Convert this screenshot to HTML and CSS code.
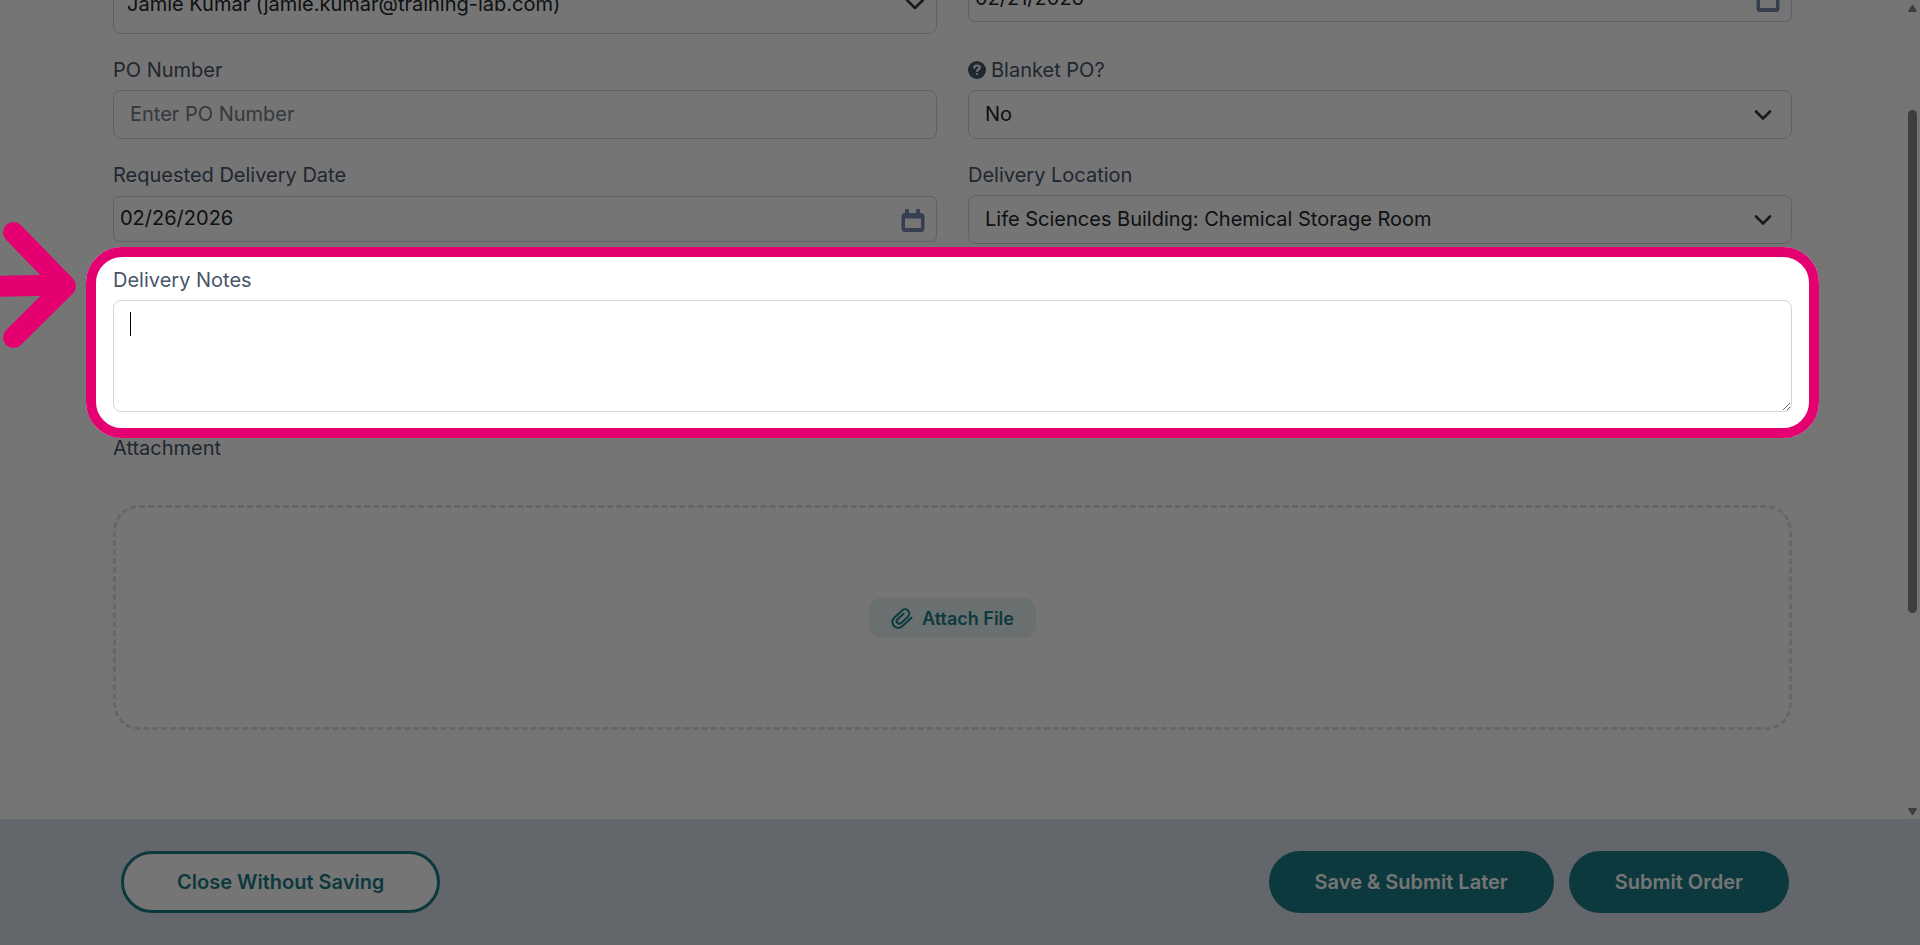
FILE: index.html
```html
<!DOCTYPE html>
<html lang="en">
<head>
<meta charset="utf-8">
<title>Order Details</title>
<link rel="stylesheet" href="styles.css">
</head>
<body>
<div class="page">
  <div class="viewport">
    <main class="content">
      <form class="form" id="order">
        <div class="row row-top">
          <div class="control">
            <select class="input select select-tall" aria-label="Requester">
              <option>Jamie Kumar (jamie.kumar@training-lab.com)</option>
            </select>
            <svg class="chevron chevron-tall" viewBox="0 0 20 20" aria-hidden="true"><path d="M2 6l8 8 8-8"/></svg>
          </div>
          <div class="control control-date">
            <input class="input date" type="text" value="02/21/2026" aria-label="Order date">
            <svg class="calendar" viewBox="0 0 24 24" aria-hidden="true"><path d="M5 0h2a1 1 0 0 1 1 1v3h7V1a1 1 0 0 1 1-1h2a1 1 0 0 1 1 1v3h1a3.500 3.500 0 0 1 3.500 3.500v12A3.500 3.500 0 0 1 20 23H4a3.500 3.500 0 0 1-3.500-3.500v-12A3.500 3.500 0 0 1 4 4V1a1 1 0 0 1 1-1zM4 9.500V19h16V9.500z"/></svg>
          </div>
        </div>

        <div class="row">
          <div class="field">
            <label class="label" for="po">PO Number</label>
            <input class="input" id="po" type="text" placeholder="Enter PO Number">
          </div>
          <div class="field">
            <label class="label" for="blanket">
              <svg class="help" viewBox="0 0 18 18" aria-hidden="true"><circle cx="9" cy="9" r="9"/><path d="M6.300 6.700c.1-1.400 1.200-2.200 2.700-2.200s2.700.9 2.700 2.200c0 1.700-2.500 1.800-2.500 3.300"/><path d="M9.100 13v.1"/></svg>
              Blanket PO?
            </label>
            <div class="control">
              <select class="input select" id="blanket"><option>No</option><option>Yes</option></select>
              <svg class="chevron" viewBox="0 0 20 20" aria-hidden="true"><path d="M3 6.500l7 7 7-7"/></svg>
            </div>
          </div>
        </div>

        <div class="row">
          <div class="field">
            <label class="label" for="delivery-date">Requested Delivery Date</label>
            <div class="control control-date">
              <input class="input date" id="delivery-date" type="text" value="02/26/2026">
              <svg class="calendar" viewBox="0 0 24 24" aria-hidden="true"><path d="M5 0h2a1 1 0 0 1 1 1v3h7V1a1 1 0 0 1 1-1h2a1 1 0 0 1 1 1v3h1a3.500 3.500 0 0 1 3.500 3.500v12A3.500 3.500 0 0 1 20 23H4a3.500 3.500 0 0 1-3.500-3.500v-12A3.500 3.500 0 0 1 4 4V1a1 1 0 0 1 1-1zM4 9.500V19h16V9.500z"/></svg>
            </div>
          </div>
          <div class="field">
            <label class="label" for="location">Delivery Location</label>
            <div class="control">
              <select class="input select" id="location"><option>Life Sciences Building: Chemical Storage Room</option></select>
              <svg class="chevron" viewBox="0 0 20 20" aria-hidden="true"><path d="M3 6.500l7 7 7-7"/></svg>
            </div>
          </div>
        </div>

        <div class="field notes">
          <label class="label" for="notes">Delivery Notes</label>
          <div class="control">
            <textarea class="input textarea" id="notes"></textarea>
            <span class="caret"></span>
          </div>
          <div class="spotlight"></div>
          <svg class="pointer" viewBox="0 0 90 130" aria-hidden="true"><path d="M-10 65.500L60 64M13.500 11.500L65.500 65 13.500 116.500"/></svg>
        </div>

        <section class="attachment">
          <h2 class="label">Attachment</h2>
          <div class="dropzone">
            <button class="attach" type="button">
              <svg class="clip" viewBox="0 0 22 21" aria-hidden="true"><path d="M20.500 9.800L11.500 18A5.800 5.800 0 0 1 2.900 10.100L10.900 2.700A4.200 4.200 0 0 1 17.200 8.400L10.100 14.900A2.500 2.500 0 0 1 6.300 11.500L12.500 5.800"/></svg>
              Attach File
            </button>
          </div>
        </section>
      </form>
    </main>
    <div class="scrollbar" aria-hidden="true">
      <svg class="arrow" viewBox="0 0 9 7"><path d="M4 0h1l4 6-1 1H1L0 6z"/></svg>
      <div class="track"><div class="thumb"></div></div>
      <svg class="arrow" viewBox="0 0 9 7"><path d="M4 7h1l4-6-1-1H1L0 1z"/></svg>
    </div>
  </div>
  <footer class="footer">
    <button class="button button-outline" type="button">Close Without Saving</button>
    <div class="actions">
      <button class="button" type="button">Save &amp; Submit Later</button>
      <button class="button" type="submit" form="order">Submit Order</button>
    </div>
  </footer>
</div>
</body>
</html>
```
FILE: styles.css
```css
* { box-sizing: border-box; }

body {
  margin: 0;
  overflow: hidden;
  background: #fff;
  color: #212529;
  font-family: Inter, "Open Sans", sans-serif;
  font-size: 20px;
  line-height: 30px;
}

.page {
  display: flex;
  flex-direction: column;
  height: 100vh;
}

.viewport {
  display: flex;
  flex: 1;
  min-height: 0;
}

.content { flex: 1; padding: 0 113px; }

.form {
  display: flex;
  flex-direction: column;
  gap: 21px;
  margin-top: -25px;
}

.row {
  display: grid;
  grid-template-columns: 1fr 1fr;
  gap: 31px;
  align-items: start;
}

.field {
  display: flex;
  flex-direction: column;
  gap: 5px;
}

.label {
  display: flex;
  align-items: center;
  gap: 5px;
  margin: 0;
  color: #475569;
  font-size: 20px;
  font-weight: 400;
}

.control { position: relative; display: flex; }

.control-date { padding-top: 1px; }

.input {
  width: 100%;
  height: 49px;
  padding: 0 16px 2px;
  border: 1px solid #ced4dc;
  border-radius: 8px;
  outline: none;
  background: transparent;
  color: #212529;
  font: inherit;
}

.input::placeholder { color: #737b85; opacity: 1; }

.select { appearance: none; }

.select-tall { height: 59px; padding: 0 13px 2px; }

.date {
  height: 46px;
  padding: 0 6px 2px;
  border-radius: 6px;
}

.chevron {
  position: absolute;
  right: 19px;
  top: 15px;
  width: 20px;
  height: 20px;
  fill: none;
  stroke: #343a40;
  stroke-width: 2.600;
  stroke-linecap: round;
  stroke-linejoin: round;
}

.chevron-tall { right: 12px; top: 19px; }

.calendar {
  position: absolute;
  right: 12px;
  top: 14px;
  width: 24px;
  height: 24px;
  fill: #7589ac;
}

.help { width: 18px; height: 18px; fill: #475569; }

.help path {
  fill: none;
  stroke: #fff;
  stroke-width: 2.200;
  stroke-linecap: round;
}

.notes { position: relative; }

.textarea {
  height: 112px;
  padding: 10px 16px;
  border-color: #cbd5e1;
  resize: vertical;
}

.caret {
  position: absolute;
  left: 17px;
  top: 12px;
  width: 1px;
  height: 24px;
  background: #000;
}

.spotlight {
  position: absolute;
  z-index: 2;
  inset: -18px -27px -26px;
  border: 10px solid #e50072;
  border-radius: 36px;
  box-shadow: 0 0 0 2000px rgba(0, 0, 0, 0.54);
  pointer-events: none;
}

.pointer {
  position: absolute;
  z-index: 3;
  left: -113px;
  top: -44px;
  width: 90px;
  height: 130px;
  fill: none;
  stroke: #e50072;
  stroke-width: 21;
  stroke-linecap: round;
  stroke-linejoin: round;
  pointer-events: none;
}

.attachment {
  display: flex;
  flex-direction: column;
  gap: 42px;
}

.dropzone {
  display: flex;
  align-items: center;
  justify-content: center;
  padding: 90px 0 89px;
  border: 3px dashed #d8e0ea;
  border-radius: 26px;
}

.attach {
  display: flex;
  align-items: center;
  gap: 9px;
  height: 40px;
  padding: 0 22px;
  border: 0;
  border-radius: 12px;
  background: #e7f3f4;
  color: #1c7c87;
  font: 600 18px Inter, "Open Sans", sans-serif;
}

.clip {
  width: 22px;
  height: 21px;
  fill: none;
  stroke: #1c7c87;
  stroke-width: 2;
  stroke-linecap: round;
  stroke-linejoin: round;
}

.scrollbar {
  display: flex;
  flex-direction: column;
  align-items: center;
  width: 15px;
  padding: 5px 0 4px;
  background: #fcfcfc;
}

.arrow { width: 9px; height: 7px; fill: #888; }

.track { flex: 1; padding-top: 98px; }

.thumb {
  width: 9px;
  height: 72%;
  border-radius: 5px;
  background: #888;
}

.footer {
  display: flex;
  align-items: center;
  justify-content: space-between;
  padding: 32px 131px 32px 121px;
  background: #d8e0ea;
}

.actions { display: flex; gap: 15px; }

.button {
  height: 62px;
  padding: 0 46px;
  border: 0;
  border-radius: 31px;
  background: #1c7c87;
  color: #fff;
  font: 600 20px Inter, "Open Sans", sans-serif;
}

.button-outline {
  padding: 0 53px;
  border: 3px solid #1c7c87;
  background: #fff;
  color: #1c7c87;
}
```
